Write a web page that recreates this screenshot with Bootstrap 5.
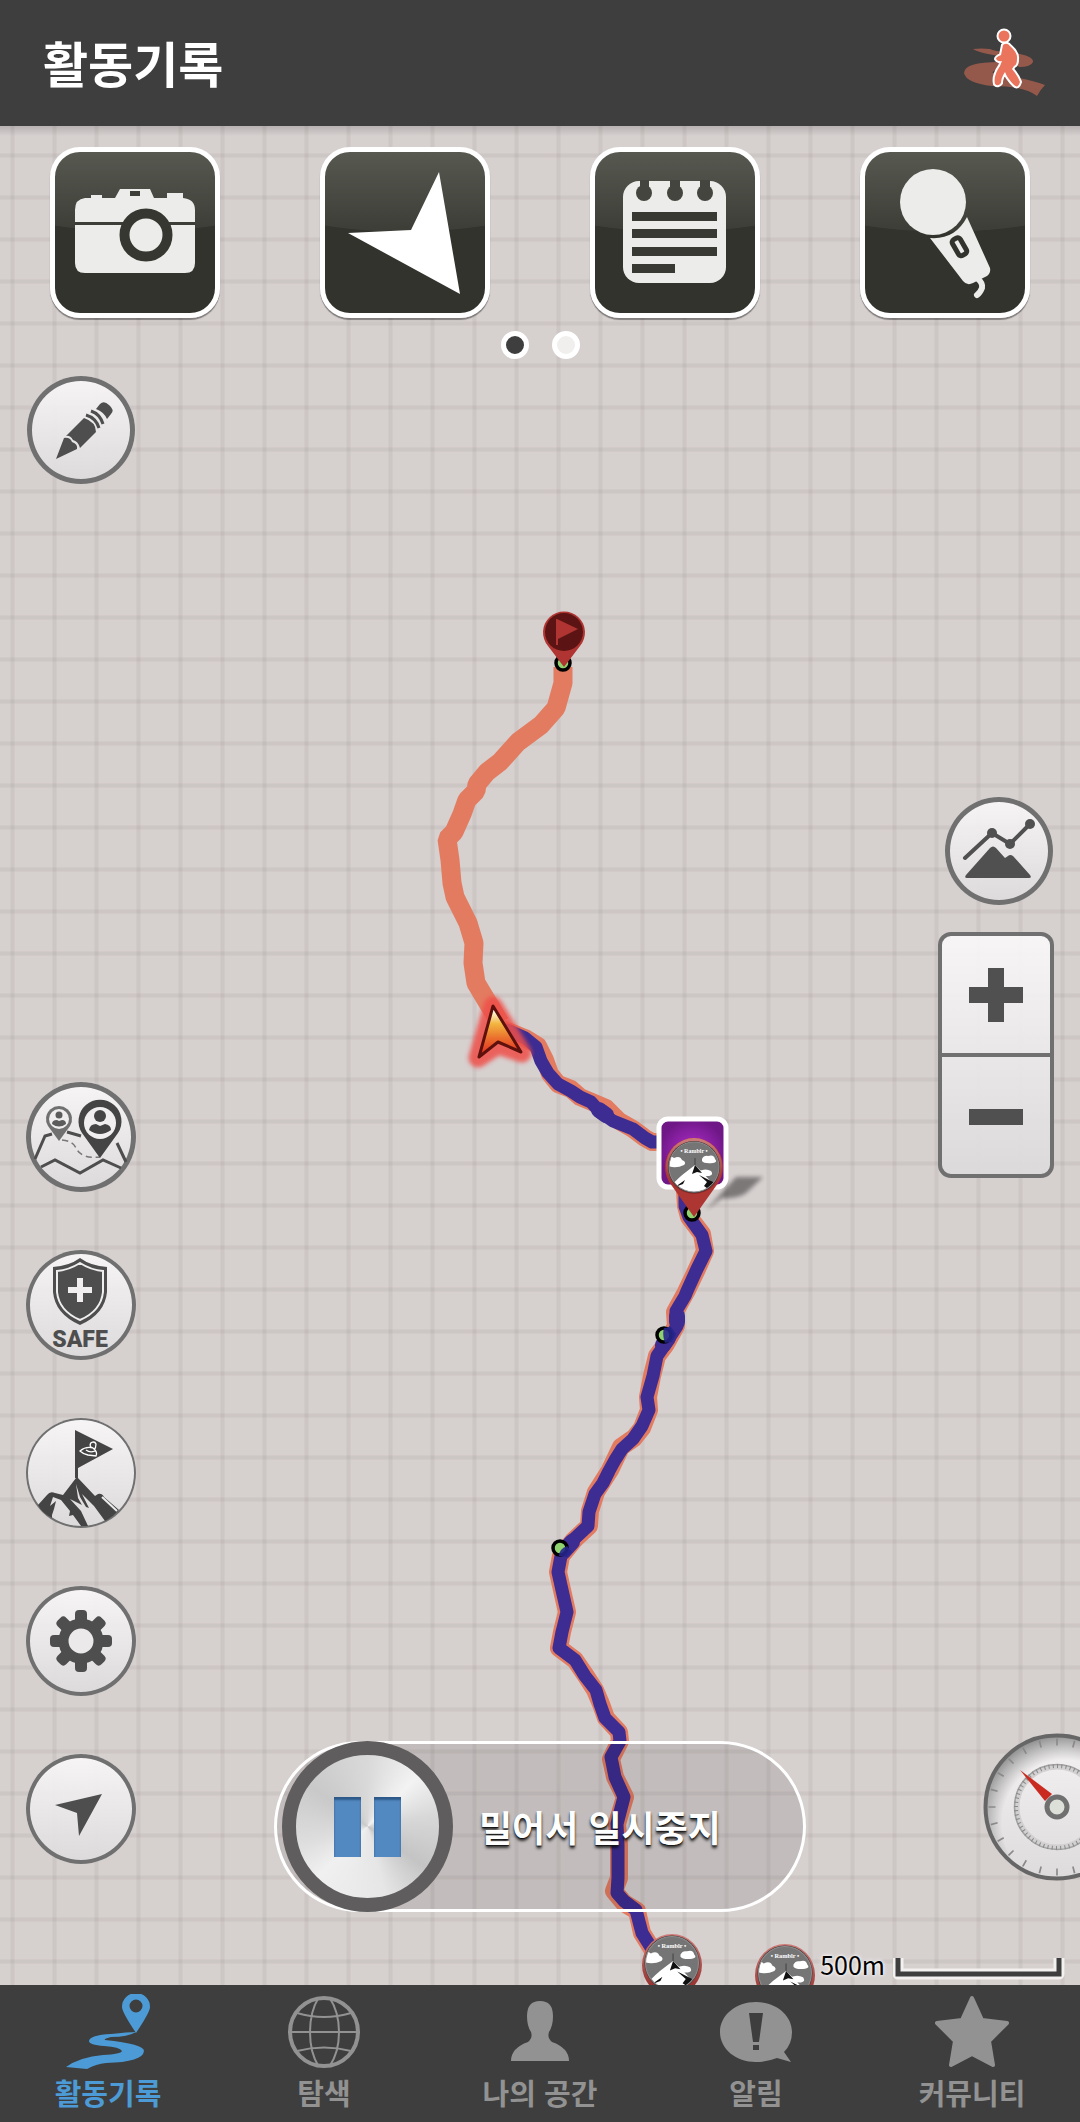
<!DOCTYPE html>
<html lang="ko">
<head>
<meta charset="utf-8">
<meta name="viewport" content="width=device-width, initial-scale=1">
<title>활동기록</title>
<link href="https://cdn.jsdelivr.net/npm/bootstrap@5.3.0/dist/css/bootstrap.min.css" rel="stylesheet">
<style>
  body { font-family: "Noto Sans CJK KR", sans-serif; background: #3e3e3e; }
  .app-head { background: #3e3e3e; height: 126px; padding: 0 34px 0 43px; }
  .app-title { font-size: 49px; line-height: 56px; padding-bottom: 2px; }
  .map-area {
    background-color: #d6d0cf;
    background-image:
      linear-gradient(to right, rgba(120,108,108,.05) 1px, rgba(120,108,108,.1) 1px, rgba(120,108,108,.1) 4px, rgba(120,108,108,.05) 4px, rgba(120,108,108,.05) 5px, transparent 5px),
      linear-gradient(to bottom, rgba(120,108,108,.05) 1px, rgba(120,108,108,.1) 1px, rgba(120,108,108,.1) 4px, rgba(120,108,108,.05) 4px, rgba(120,108,108,.05) 5px, transparent 5px);
    background-size: 42px 42px;
    background-position: 10px 27px;
  }
  .head-shade { height: 10px; background: linear-gradient(rgba(0,0,0,.14), transparent); }
  .tools { padding-top: 21px; }
  .tool {
    width: 170px; height: 171px; border: 5px solid #fff; border-radius: 30px;
    background: radial-gradient(ellipse 210px 80px at 50% 0, transparent 99%, #32332d 100%), linear-gradient(#575850, #3c3d36 80px);
    box-shadow: 0 2px 1px rgba(0,0,0,.4);
  }
  .dots { gap: 23px; margin: 13px 0 16px; }
  .dot { width: 28px; height: 28px; border: 5px solid #fff; border-radius: 50%; background: #f0efed; }
  .dot.on { background: #3e3e3e; }
  .side { width: 162px; }
  .side-left { padding: 1px 0 121px 26px; }
  .side-right { padding: 422px 26px 104px 0; }
  .stack { gap: 58px; }
  .round-btn {
    width: 110px; height: 110px; border-radius: 50%; color: #4e4e4e; --ring: 4px;
    background: linear-gradient(rgba(250,248,249,.92), rgba(220,218,219,.95));
    box-shadow: inset 0 0 0 var(--ring) #707070;
  }
  .round-btn.small-btn { width: 108px; height: 108px; margin: 0 1px; --ring: 5px; }
  .ring-thick { --ring: 5px; }
  .ring-thin { --ring: 2px; }
  .zoomer {
    width: 116px; height: 246px; margin-top: 27px; border: 4px solid #707070; border-radius: 13px;
    background: linear-gradient(rgba(250,248,249,.92), rgba(220,218,219,.95));
  }
  .zoomer button + button { border-top: 4px solid #707070 !important; }
  .gauge { width: 148px; height: 148px; margin-right: -77px; }
  .slide-wrap { padding-bottom: 73px; }
  .slide {
    width: 532px; height: 171px; border: 3px solid #fff; border-radius: 86px; padding: 0 0 0 5px;
    background: rgba(0,0,0,.09);
  }
  .knob {
    width: 171px; height: 171px; border-radius: 50%; border: 14px solid #5f5d5e; gap: 13px; margin: -3px 0;
    background: conic-gradient(#d9d9d9, #f3f3f3 45deg, #d8d8d8 80deg, #c4c4c4 125deg, #e6e6e6 165deg, #f0f0f0 225deg, #dedede 255deg, #c9c9c9 305deg, #d2d2d2 335deg, #d9d9d9);
  }
  .knob span { width: 27px; height: 60px; background: #5289c0; box-shadow: inset 0 3px 2px rgba(0,30,70,.45); }
  .slide-text { font-size: 36px; line-height: 44px; color: #fff; margin-left: 26px; padding-bottom: 2px; text-shadow: 0 3px 3px rgba(0,0,0,.75), 0 1px 1px #333; }
  .scale { right: 14px; bottom: 9px; gap: 8px; }
  .scale-text { font-size: 25px; line-height: 32px; color: #000; text-shadow: 0 0 5px #fff, 0 0 3px #fff; }
  .scale { bottom: 5px; }
  .app-foot { background: #3e3e3e; height: 137px; }
  .foot-link { color: #929292; font-size: 29px; line-height: 32px; font-weight: 700; padding-top: 9px; }
  .foot-link.active { color: #4c9bd6; }
  .foot-link svg { margin-bottom: 6px; }
</style>
</head>
<body class="d-flex flex-column min-vh-100">

<header class="app-head d-flex align-items-center justify-content-between">
  <h1 class="app-title fw-bold text-white mb-0">활동기록</h1>
  <button class="btn p-0 border-0" type="button" aria-label="걷기">
    <svg class="d-block" width="82" height="70" viewBox="0 0 82 70">
      <g fill="#95594c">
        <path d="M9 21Q17 20 26 21Q30 23 40 24L56 26Q70 29 69 34Q67 39 55 39L50 34Q38 28 24 26Q14 24 9 21Z"/>
        <path d="M36 34Q0 34 0 45Q2 55 28 58Q60 58 73 68Q76 62 81 57Q70 53 55 50L29 45Q27 43 36 41Z"/>
      </g>
      <g stroke="#fff" stroke-width="4" stroke-linejoin="round" fill="#fff">
        <circle cx="40" cy="8" r="5.5"/>
        <path d="M39 17Q43 14 46 18Q54 25 53 31Q53 37 50 38L48 41Q54 48 56 54Q54 61 50 57Q43 50 41 44Q37 50 37 55Q34 59 31 56Q29 48 36 38L38 33Q34 34 32 31Q32 29 37 27Z"/>
      </g>
      <g fill="#ea755c">
        <circle cx="40" cy="8" r="5.5"/>
        <path d="M39 17Q43 14 46 18Q54 25 53 31Q53 37 50 38L48 41Q54 48 56 54Q54 61 50 57Q43 50 41 44Q37 50 37 55Q34 59 31 56Q29 48 36 38L38 33Q34 34 32 31Q32 29 37 27Z"/>
      </g>
    </svg>
  </button>
</header>

<main class="map-area position-relative overflow-hidden flex-grow-1 d-flex flex-column">
  <svg class="position-absolute top-0 start-0 w-100 h-100" viewBox="0 126 1080 1859" preserveAspectRatio="xMidYMin slice" aria-label="지도">
    <defs>
      <linearGradient id="fire" x1="0" y1="0" x2="0" y2="1"><stop offset=".1" stop-color="#fffbe6"/><stop offset=".35" stop-color="#f2b53f"/><stop offset=".65" stop-color="#ea6a2c"/><stop offset="1" stop-color="#e32222"/></linearGradient>
      <radialGradient id="violet"><stop offset="0" stop-color="#b32fd0"/><stop offset="1" stop-color="#6f1787"/></radialGradient>
      <linearGradient id="rim" x1="0" y1="0" x2="0" y2="1"><stop offset="0" stop-color="#cf7c79"/><stop offset="1" stop-color="#8c2522"/></linearGradient>
      <filter id="glow" x="-40%" y="-40%" width="180%" height="180%"><feGaussianBlur stdDeviation="2"/></filter>
      <clipPath id="disc"><circle r="25"/></clipPath>
      <g id="photo">
        <circle r="26" fill="#3d3a3a"/>
        <circle r="25" fill="#757575"/>
        <g clip-path="url(#disc)">
          <g fill="#fff">
            <path d="M-27 -8Q-24 -12-20 -9Q-14 -12-12 -7Q-7 -5-10 -2Q-18 2-26 -1Z"/>
            <path d="M8 -8Q10 -12 14 -11Q20 -13 21 -8Q24 -5 19 -4Q10 -3 8 -6Z"/>
            <path d="M5 4Q12 1 17 4Q20 8 15 9L7 9Z"/>
            <path d="M-24 20Q-15 10-8 5L1 -2L9 6L20 18L14 27L-18 27Z"/>
          </g>
          <path d="M1 -9V-2" stroke="#444" stroke-width="1"/>
          <path d="M-2 7L1 -2L8 6L3 5ZM5 8L21 16L17 24L10 19L13 15ZM-19 20L-9 13L-11 17Z" fill="#111"/>
        </g>
        <circle r="25" fill="none" stroke="#8e8e8e" stroke-width="1"/>
        <text y="-14" text-anchor="middle" font-family="Liberation Serif, serif" font-weight="700" font-size="6" fill="#fff">• Ramblr •</text>
      </g>
    </defs>
    <path fill="none" stroke="#e37b60" stroke-width="19" stroke-linejoin="bevel" d="M563 667L563 683L556 708L541 725L518 742L500 762L487 772L477 784L476 791L467 800L462 814L454 832L447 839L450 860L452 883L455 897L468 923L474 943L473 963L476 983L488 1003L500 1023"/>
    <g fill="none" stroke-linejoin="round" stroke-linecap="round">
      <g stroke="#e37b60" stroke-width="18">
        <path d="M505 1030L525 1038L538 1046L545 1060L550 1074L558 1084L571 1089L580 1097L592 1102L606 1108L619 1121L633 1129L645 1138L652 1142L675 1142"/>
        <path d="M685 1190L686 1206L689 1217L702 1234L705 1251L697 1269L686 1292L675 1312L676 1326L666 1344L657 1356L652 1376L648 1397L649 1410L642 1428L634 1438L621 1447L610 1470L596 1492L590 1511L589 1526L574 1540L561 1556L558 1572L562 1590L567 1612L562 1632L559 1648L575 1660L586 1676L595 1690L601 1704L606 1718L619 1732L620 1741L611 1759L615 1777L625 1797L617 1824L619 1845L619 1878L614 1891L624 1903L637 1911L642 1933L652 1949L665 1965"/>
      </g>
      <g stroke="#3d2c92" stroke-width="13">
        <path d="M507 1030L525 1038L536 1047L541 1061L548 1073L558 1084L571 1091L580 1097L591 1102L600 1112L613 1121L633 1129L645 1138L652 1142L675 1142"/>
        <path d="M685 1190L685 1206L689 1217L702 1235L706 1251L697 1269L692 1280L687 1291L685 1296L676 1311L677 1326L666 1343L657 1356L653 1376L647 1397L649 1410L642 1426L633 1439L622 1449L615 1460L609 1471L603 1483L595 1494L589 1512L588 1526L573 1540L561 1556L558 1572L562 1590L567 1612L562 1632L559 1648L575 1660L585 1676L596 1690L600 1704L605 1718L619 1732L620 1741L611 1757L615 1777L624 1797L617 1824L618 1845L618 1878L617 1893L624 1901L636 1910L642 1933L652 1949L665 1965"/>
        <path stroke-width="16" d="M599 1110L606 1115M677 1316V1322M663 1345L668 1338M572 1542L563 1552"/>
      </g>
    </g>
    <g stroke="#000" stroke-width="3.5" fill="#8fd36f">
      <circle cx="563" cy="663" r="7"/><circle cx="692" cy="1213" r="7"/>
      <circle cx="664" cy="1335" r="7"/><circle cx="560" cy="1548" r="7"/>
    </g>
    <path d="M664 1328Q662 1335 665 1343L672 1342L676 1334L671 1327ZM567 1546Q559 1549 559 1556L567 1557L572 1552Z" fill="#26258c" opacity=".9"/>
    <path d="M564 667L548 646A21 21 0 1 1 580 646Z" fill="#b03431"/>
    <circle cx="564" cy="632" r="19" fill="#5b1413"/>
    <path d="M557 619L578 629L558 639V645H556V619Z" fill="#b03431"/>
    <path d="M493 1006L478 1058L498 1045L522 1053Z" fill="#ef5048" stroke="#ef5048" stroke-width="19" stroke-linejoin="round" opacity=".85" filter="url(#glow)"/>
    <path d="M493 1006L479 1057L498 1042L521 1052Z" fill="url(#fire)" stroke="#5e100c" stroke-width="3" stroke-linejoin="round"/>
    <path d="M706 1210L736 1177L763 1177L746 1193Q738 1199 722 1198Z" fill="#000" opacity=".42" filter="url(#glow)"/>
    <rect x="659" y="1119" width="67" height="68" rx="9" fill="url(#violet)" stroke="#fff" stroke-width="5"/>
    <path d="M694 1217L672 1186A29 29 0 1 1 716 1186Z" fill="#ae3632"/>
    <circle cx="694" cy="1166" r="28" fill="url(#rim)"/>
    <use href="#photo" x="694" y="1167"/>
    <g id="stop-a"><ellipse cx="672" cy="1965" rx="30" ry="31" fill="url(#rim)"/><use href="#photo" transform="translate(672 1963) scale(1.06)"/></g>
    <use href="#stop-a" x="113" y="10"/>
  </svg>
  <div class="head-shade position-absolute top-0 start-0 w-100"></div>

  <div class="tools row g-0 position-relative">
    <div class="col-3 d-flex justify-content-center">
      <button class="tool p-0" type="button" aria-label="사진">
        <svg class="d-block" width="160" height="161" viewBox="5 5 160 161">
          <path fill="#ececea" d="M35 51H41V48H52V51H65L70 42H100L104 51H117V46H133V51Q145 52 145 63V116Q145 126 135 126H35Q25 126 25 116V63Q25 52 35 51Z"/>
          <path fill="#3d3e37" d="M80 44H90V49H80ZM25 75H145V78H25Z"/>
          <circle cx="96" cy="88" r="21.5" fill="#ececea" stroke="#363730" stroke-width="10"/>
        </svg>
      </button>
    </div>
    <div class="col-3 d-flex justify-content-center">
      <button class="tool p-0" type="button" aria-label="길 안내">
        <svg class="d-block" width="160" height="161" viewBox="5 5 160 161"><path fill="#fff" d="M119 25L140 147L28 86L91 83Z"/></svg>
      </button>
    </div>
    <div class="col-3 d-flex justify-content-center">
      <button class="tool p-0" type="button" aria-label="메모">
        <svg class="d-block" width="160" height="161" viewBox="5 5 160 161">
          <rect x="33" y="34" width="103" height="102" rx="16" fill="#ececea"/>
          <g fill="#44453e"><circle cx="54" cy="46" r="8"/><circle cx="85" cy="46" r="8"/><circle cx="115" cy="46" r="8"/><path d="M50 33H59V45H50ZM80 33H90V45H80ZM110 33H120V45H110Z"/></g>
          <path fill="#383932" d="M42 65H127V74H42ZM42 82H127V91H42ZM42 100H127V109H42ZM42 117H85V126H42Z"/>
        </svg>
      </button>
    </div>
    <div class="col-3 d-flex justify-content-center">
      <button class="tool p-0" type="button" aria-label="음성">
        <svg class="d-block" width="160" height="161" viewBox="5 5 160 161">
          <g fill="#ececea"><circle cx="73" cy="55" r="33"/><path d="M107 70L130 121Q131 126 127 129L113 136Q107 139 103 134L70 91Q95 93 107 70Z"/></g>
          <path d="M118 132Q123 136 122 141Q120 146 117 148" fill="none" stroke="#ececea" stroke-width="6" stroke-linecap="round"/>
          <rect x="95" y="91" width="9" height="18" rx="3" fill="#ececea" stroke="#32332d" stroke-width="5" transform="rotate(-30 99 100)"/>
        </svg>
      </button>
    </div>
  </div>
  <div class="dots d-flex justify-content-center position-relative"><span class="dot on"></span><span class="dot"></span></div>

  <div class="d-flex justify-content-between flex-grow-1 position-relative">
    <div class="side side-left d-flex flex-column justify-content-between">
      <button class="round-btn small-btn border-0 p-0" type="button" aria-label="그리기">
        <svg class="d-block" width="108" height="108" viewBox="0 0 108 108" fill="currentColor">
          <path d="M29 83L37 62Q43 61 45 66Q51 68 50 73ZM39 60L57 42Q69 46 69 56L53 72Q51 65 46 64Q43 59 39 60ZM69 33L73 28Q77 24 82 29Q88 34 84 38L80 43Q77 36 69 33Z"/>
          <path d="M59 39Q69 42 72 52M64 35Q73 38 76 48" fill="none" stroke="currentColor" stroke-width="3"/>
        </svg>
      </button>
      <div class="stack d-flex flex-column">
        <button class="round-btn ring-thick border-0 p-0" type="button" aria-label="동행">
          <svg class="d-block" width="110" height="110" viewBox="0 0 110 110">
            <g fill="none" stroke="#4e4e4e" stroke-width="3">
              <path d="M9 77L19 54L26 52M41 50L55 54M91 61L100 80M15 85L29 78L54 91L77 78L95 86"/>
              <path d="M36 58Q47 59 50 66Q55 77 74 75" stroke-width="1.5" stroke-dasharray="6 4" stroke="#777"/>
            </g>
            <path d="M33 59L22 44A13 13 0 1 1 44 44Z" fill="#707070"/><circle cx="33" cy="37" r="10" fill="#f0eeef"/>
            <g fill="#5c5c5c"><circle cx="33" cy="33" r="3.5"/><path d="M26 42Q26 38 31 38L33 39L36 38Q40 38 40 42Q33 47 26 42Z"/></g>
            <path d="M74 76L56 51A21.500 21.500 0 1 1 92 51Z" fill="#444"/><circle cx="74" cy="41" r="16" fill="#f0eeef"/>
            <g fill="#444"><circle cx="74" cy="34" r="6"/><path d="M63 48Q64 42 70 42L74 44L79 42Q85 43 85 48Q74 56 63 48Z"/></g>
          </svg>
        </button>
        <button class="round-btn border-0 p-0" type="button" aria-label="SAFE">
          <svg class="d-block" width="110" height="110" viewBox="0 0 110 110">
            <path d="M54 8Q65 16 81 17V42Q79 64 54 75Q29 64 27 42V17Q43 16 54 8Z" fill="#4e4e4e"/>
            <path d="M54 13Q65 20 77 21V42Q75 61 54 70Q33 61 31 42V21Q43 20 54 13Z" fill="none" stroke="#f0eeef" stroke-width="2"/>
            <path d="M51 28H57V37H66V43H57V52H51V43H42V37H51Z" fill="#f0eeef"/>
            <text x="54" y="97" text-anchor="middle" font-family="Roboto, sans-serif" font-weight="900" font-size="23" fill="#4e4e4e">SAFE</text>
          </svg>
        </button>
        <button class="round-btn ring-thin border-0 p-0" type="button" aria-label="정상">
          <svg class="d-block" width="110" height="110" viewBox="0 0 110 110">
            <path d="M49 12L87 31L52 50V60H49Z" fill="#444"/>
            <path d="M54 33Q60 28 67 30Q72 34 70 38L62 37Q57 36 54 33ZM60 32Q64 35 69 33M67 30A3 3 0 1 1 70 26Q70 30 68 32" fill="none" stroke="#fff" stroke-width="1.300"/>
            <path fill="#444" d="M12 87L21 77Q24 73 29 75L37 77L50 60H52L69 78L72 76Q76 75 78 79L93 92Q87 99 79 103L68 88L56 76L63 90L60 89L54 79L50 66L52 80L56 87L44 81L55 93L62 108H55L47 97L43 98L44 93L35 82L27 79L24 88L30 83L28 91L26 97V100Q16 95 12 87Z"/>
            <path d="M76 79L91 93" stroke="#eee" stroke-width="2"/>
          </svg>
        </button>
        <button class="round-btn border-0 p-0" type="button" aria-label="설정">
          <svg class="d-block" width="110" height="110" viewBox="0 0 110 110">
            <g fill="#4e4e4e"><rect x="49" y="24" width="12" height="62" rx="4"/><rect x="24" y="49" width="62" height="12" rx="4"/><g transform="rotate(45 55 55)"><rect x="49" y="24" width="12" height="62" rx="4"/><rect x="24" y="49" width="62" height="12" rx="4"/></g></g>
            <circle cx="55" cy="55" r="17.500" fill="#ebe9ea" stroke="#4e4e4e" stroke-width="10"/>
          </svg>
        </button>
        <button class="round-btn border-0 p-0" type="button" aria-label="현재 위치">
          <svg class="d-block" width="110" height="110" viewBox="0 0 110 110"><path d="M76 40L53 82L51 59L29 51Z" fill="#4e4e4e"/></svg>
        </button>
      </div>
    </div>

    <div class="slide-wrap d-flex align-items-end">
      <button class="slide d-flex align-items-center" type="button">
        <span class="knob d-flex align-items-center justify-content-center flex-shrink-0"><span></span><span></span></span>
        <span class="slide-text fw-bold">밀어서 일시중지</span>
      </button>
    </div>

    <div class="side side-right d-flex flex-column align-items-end">
      <button class="round-btn small-btn border-0 p-0" type="button" aria-label="고도">
        <svg class="d-block" width="108" height="108" viewBox="0 0 108 108" fill="#505050">
          <path d="M20 61L47 36L65 47L85 27" fill="none" stroke="#505050" stroke-width="4" stroke-linecap="round"/>
          <circle cx="47" cy="36" r="5"/><circle cx="65" cy="47" r="5"/><circle cx="85" cy="27" r="5"/>
          <path d="M21 78L45 51Q48 48 51 51L60 61L63 59Q65 57 68 59L85 78Q87 81 84 81H22Q19 81 21 78Z"/>
        </svg>
      </button>
      <div class="zoomer d-flex flex-column">
        <button class="btn border-0 rounded-0 p-0 flex-fill d-flex align-items-center justify-content-center" type="button" aria-label="확대"><svg width="54" height="54"><path d="M19 0H35V19H54V35H35V54H19V35H0V19H19Z" fill="#505050"/></svg></button>
        <button class="btn border-0 rounded-0 p-0 flex-fill d-flex align-items-center justify-content-center" type="button" aria-label="축소"><svg width="54" height="54"><path d="M0 20H54V36H0Z" fill="#505050"/></svg></button>
      </div>
      <svg class="gauge mt-auto flex-shrink-0" viewBox="0 0 148 148">
        <defs>
          <linearGradient id="dial" x1="0" y1="0" x2="0" y2="1"><stop offset="0" stop-color="#f4f2f3"/><stop offset="1" stop-color="#dddbdc"/></linearGradient>
          <radialGradient id="dialedge" gradientUnits="userSpaceOnUse" cx="82" cy="90" r="90"><stop offset=".7" stop-color="#777" stop-opacity="0"/><stop offset="1" stop-color="#666" stop-opacity=".75"/></radialGradient>
        </defs>
        <circle cx="74" cy="74" r="72" fill="url(#dial)"/>
        <circle cx="74" cy="74" r="72" fill="url(#dialedge)"/>
        <circle cx="74" cy="74" r="71.500" fill="none" stroke="#666" stroke-width="4"/>
        <circle cx="74" cy="74" r="65" fill="none" stroke="#8a8a8a" stroke-width="7" pathLength="240" stroke-dasharray="1 9" stroke-dashoffset=".5"/>
        <circle cx="74" cy="74" r="40" fill="none" stroke="#d2d0d1" stroke-width="5"/>
        <circle cx="74" cy="74" r="42.500" fill="none" stroke="#a2a2a2" stroke-width="1.500"/>
        <circle cx="74" cy="74" r="41" fill="none" stroke="#8a8a8a" stroke-width="4" pathLength="240" stroke-dasharray="1 3"/>
        <path d="M37 37L69 61L62 68Z" fill="#c92b20"/>
        <circle cx="74" cy="74" r="10" fill="#dde0d8" stroke="#707070" stroke-width="5"/>
      </svg>
    </div>
  </div>

  <div class="scale position-absolute d-flex align-items-start">
    <span class="scale-text">500m</span>
    <svg class="align-self-end" width="173" height="24" viewBox="0 0 173 24"><path d="M5 2V18H166V2" fill="none" stroke="#f3f0f0" stroke-width="11" stroke-linejoin="round"/><path d="M5 0V16H166V0" transform="translate(0 2)" fill="none" stroke="#3e3e3e" stroke-width="5"/></svg>
  </div>
</main>

<nav class="app-foot row row-cols-5 g-0 text-center">
  <a class="foot-link active col text-decoration-none" href="#">
    <svg class="d-block mx-auto" width="84" height="76" viewBox="0 0 84 76" fill="currentColor">
      <path fill-rule="evenodd" d="M70 39Q56 18 56 13A14 14 0 0 1 84 13Q84 18 70 39ZM70 5.500A6.500 6.500 0 1 0 70 18.500A6.500 6.500 0 1 0 70 5.500Z"/>
      <path d="M70 38Q62 43 45 43Q37 45 39 46Q78 50 78 57Q77 68 40 69Q30 70 21 75L0 73Q14 63 37 61Q55 60 56 57Q54 53 38 52Q23 51 23 47Q24 41 45 40Q62 38 70 38Z"/>
    </svg>
    <span>활동기록</span>
  </a>
  <a class="foot-link col text-decoration-none" href="#">
    <svg class="d-block mx-auto" width="74" height="76" viewBox="0 0 74 76" fill="none" stroke="currentColor" stroke-width="2">
      <clipPath id="globe"><circle cx="37" cy="38" r="34"/></clipPath>
      <circle cx="37" cy="38" r="34" stroke-width="4"/><path clip-path="url(#globe)" d="M32 3Q23 17 23 38T32 73M42 3Q52 17 52 38T42 73M3 38H71M10 19Q37 27 64 19M10 57Q37 50 64 57"/>
    </svg>
    <span>탐색</span>
  </a>
  <a class="foot-link col text-decoration-none" href="#">
    <svg class="d-block mx-auto" width="60" height="76" viewBox="0 0 60 76" fill="currentColor"><path d="M30 7Q43 7 43 22Q43 32 39 38Q37 44 42 48Q59 54 59 67H1Q1 54 18 48Q23 44 21 38Q17 32 17 22Q17 7 30 7Z"/></svg>
    <span>나의 공간</span>
  </a>
  <a class="foot-link col text-decoration-none" href="#">
    <svg class="d-block mx-auto" width="74" height="76" viewBox="0 0 74 76">
      <path d="M37 8C57 8 73 21 73 38Q73 50 65 58L72 68L58 64Q48 68 37 68C17 68 1 55 1 38S17 8 37 8Z" fill="currentColor"/>
      <path d="M30 19H44L40 48H34ZM34 51H40V56H34Z" fill="#3e3e3e"/>
    </svg>
    <span>알림</span>
  </a>
  <a class="foot-link col text-decoration-none" href="#">
    <svg class="d-block mx-auto" width="74" height="76" viewBox="0 0 74 76" fill="currentColor" stroke="currentColor" stroke-width="4" stroke-linejoin="round"><path d="M37 4L47 26L72 29L54 47L58 71L37 60L16 71L20 47L2 29L27 26Z"/></svg>
    <span>커뮤니티</span>
  </a>
</nav>

<script src="https://cdn.jsdelivr.net/npm/bootstrap@5.3.0/dist/js/bootstrap.bundle.min.js"></script>
</body>
</html>
